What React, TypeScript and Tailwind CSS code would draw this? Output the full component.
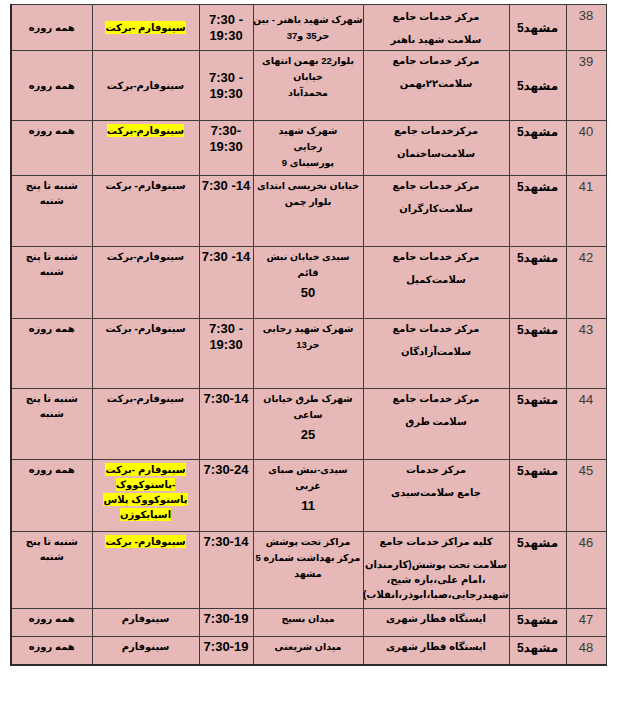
import React from "react";

type Row = {
  n: number;
  h: string;
  mid?: string[];
  center: string[][];
  addr: string[][];
  time: string[];
  vac: string[];
  hl?: boolean;
  days: string[];
};

const rows: Row[] = [
  {
    n: 38,
    h: "h-[46px]",
    mid: ["city", "center", "addr", "time", "vac", "days"],
    center: [["مرکز خدمات جامع"], ["سلامت  شهید باهنر"]],
    addr: [["شهرک شهید باهنر - بین", "حر35 و37"]],
    time: ["7:30 -", "19:30"],
    vac: ["سینوفارم -برکت"],
    hl: true,
    days: ["همه روزه"],
  },
  {
    n: 39,
    h: "h-[70px]",
    mid: ["city", "time", "vac", "days"],
    center: [["مرکز خدمات جامع"], ["سلامت۲۲بهمن"]],
    addr: [["بلوار22 بهمن انتهای", "خیابان", "محمدآباد"]],
    time: ["7:30 -", "19:30"],
    vac: ["سینوفارم-برکت"],
    days: ["همه روزه"],
  },
  {
    n: 40,
    h: "h-[55px]",
    center: [["مرکزخدمات جامع"], ["سلامت‌ساختمان"]],
    addr: [["شهرک شهید", "رجایی", "پورسینای 9"]],
    time: ["7:30-", "19:30"],
    vac: ["سینوفارم-برکت"],
    hl: true,
    days: ["همه روزه"],
  },
  {
    n: 41,
    h: "h-[71px]",
    center: [["مرکز خدمات جامع"], ["سلامت‌کارگران"]],
    addr: [["خیابان نخریسی ابتدای", "بلوار چمن"]],
    time: ["7:30 -14"],
    vac: ["سینوفارم- برکت"],
    days: ["شنبه تا پنج", "شنبه"],
  },
  {
    n: 42,
    h: "h-[72px]",
    center: [["مرکز خدمات جامع"], ["سلامت‌کمیل"]],
    addr: [["سیدی خیابان نبش", "قائم"], ["50"]],
    time: ["7:30 -14"],
    vac: ["سینوفارم-برکت"],
    days: ["شنبه تا پنج", "شنبه"],
  },
  {
    n: 43,
    h: "h-[70px]",
    center: [["مرکز خدمات جامع"], ["سلامت‌آزادگان"]],
    addr: [["شهرک شهید رجایی", "حر13"]],
    time: ["7:30 -", "19:30"],
    vac: ["سینوفارم- برکت"],
    days: ["همه روزه"],
  },
  {
    n: 44,
    h: "h-[71px]",
    center: [["مرکز خدمات جامع"], ["سلامت طرق"]],
    addr: [["شهرک طرق خیابان", "ساعی"], ["25"]],
    time: ["7:30-14"],
    vac: ["سینوفارم-برکت"],
    days: ["شنبه تا پنج", "شنبه"],
  },
  {
    n: 45,
    h: "h-[72px]",
    center: [["مرکز خدمات"], ["جامع سلامت‌سیدی"]],
    addr: [["سیدی-نبش صبای", "غربی"], ["11"]],
    time: ["7:30-24"],
    vac: ["سینوفارم -برکت", "-پاستوکووک", "پاستوکووک پلاس", "اسپایکوژن"],
    hl: true,
    days: ["همه روزه"],
  },
  {
    n: 46,
    h: "h-[77px]",
    center: [
      ["کلیه مراکز خدمات جامع"],
      ["سلامت تحت پوشش(کارمندان", "،امام علی،بازه شیخ،", "شهیدرجایی،صبا،ابوذر،انقلاب)"],
    ],
    addr: [["مراکز تحت پوشش", "مرکز بهداشت شماره 5", "مشهد"]],
    time: ["7:30-14"],
    vac: ["سینوفارم- برکت"],
    hl: true,
    days: ["شنبه تا پنج", "شنبه"],
  },
  {
    n: 47,
    h: "h-[28px]",
    center: [["ایستگاه قطار شهری"]],
    addr: [["میدان بسیج"]],
    time: ["7:30-19"],
    vac: ["سینوفارم"],
    days: ["همه روزه"],
  },
  {
    n: 48,
    h: "h-[28px]",
    center: [["ایستگاه قطار شهری"]],
    addr: [["میدان شریعتی"]],
    time: ["7:30-19"],
    vac: ["سینوفارم"],
    days: ["همه روزه"],
  },
];

const td = "border border-[#3c3c3c] text-center px-0";

function va(row: Row, key: string) {
  return row.mid?.includes(key) ? "align-middle py-0" : "align-top pt-[2px] pb-0";
}

export default function App() {
  return (
    <div className="min-h-[703px] bg-white pt-[4px] pl-[10px] font-['Liberation_Sans','DejaVu_Sans',sans-serif] text-black">
      <table
        dir="rtl"
        className="w-[595px] table-fixed border-collapse border-l-2 border-b-2 border-[#2a2a2a] bg-[#e6b9b8]"
      >
        <colgroup>
          <col className="w-[40px]" />
          <col className="w-[57px]" />
          <col className="w-[146px]" />
          <col className="w-[110px]" />
          <col className="w-[54px]" />
          <col className="w-[107px]" />
          <col className="w-[81px]" />
        </colgroup>
        <tbody>
          {rows.map((r) => (
            <tr key={r.n} className={r.h}>
              <td className={`${td} align-top pt-[3px] text-[13px] leading-[16px] text-[#3a3a3a]`}>{r.n}</td>
              <td className={`${td} ${va(r, "city")} whitespace-nowrap text-[12px] font-bold leading-[18px]`}>
                مشهد5
              </td>
              <td className={`${td} ${va(r, "center")} text-[10px] font-bold leading-[15px]`}>
                <div className="flex flex-col gap-[8px]">
                  {r.center.map((p, i) => (
                    <div key={i}>
                      {p.map((l) => (
                        <div key={l} className="whitespace-nowrap">
                          {l}
                        </div>
                      ))}
                    </div>
                  ))}
                </div>
              </td>
              <td className={`${td} ${va(r, "addr")} text-[9.5px] font-bold leading-[16px]`}>
                <div className="flex flex-col gap-[4px]">
                  {r.addr.map((p, i) => (
                    <div key={i} className={i > 0 ? "text-[13px]" : ""}>
                      {p.map((l) => (
                        <div key={l} className="whitespace-nowrap">
                          {l}
                        </div>
                      ))}
                    </div>
                  ))}
                </div>
              </td>
              <td className={`${td} ${va(r, "time")} text-[13px] font-bold leading-[16px]`}>
                {r.time.map((l) => (
                  <div key={l} dir="ltr" className="whitespace-nowrap">
                    {l}
                  </div>
                ))}
              </td>
              <td className={`${td} ${va(r, "vac")} text-[10px] font-bold leading-[15px]`}>
                {r.vac.map((l) => (
                  <div key={l}>
                    <span className={r.hl ? "bg-[#ffff00] py-[1px]" : ""}>{l}</span>
                  </div>
                ))}
              </td>
              <td className={`${td} ${va(r, "days")} text-[10px] font-bold leading-[15px]`}>
                {r.days.map((l) => (
                  <div key={l}>{l}</div>
                ))}
              </td>
            </tr>
          ))}
        </tbody>
      </table>
    </div>
  );
}
